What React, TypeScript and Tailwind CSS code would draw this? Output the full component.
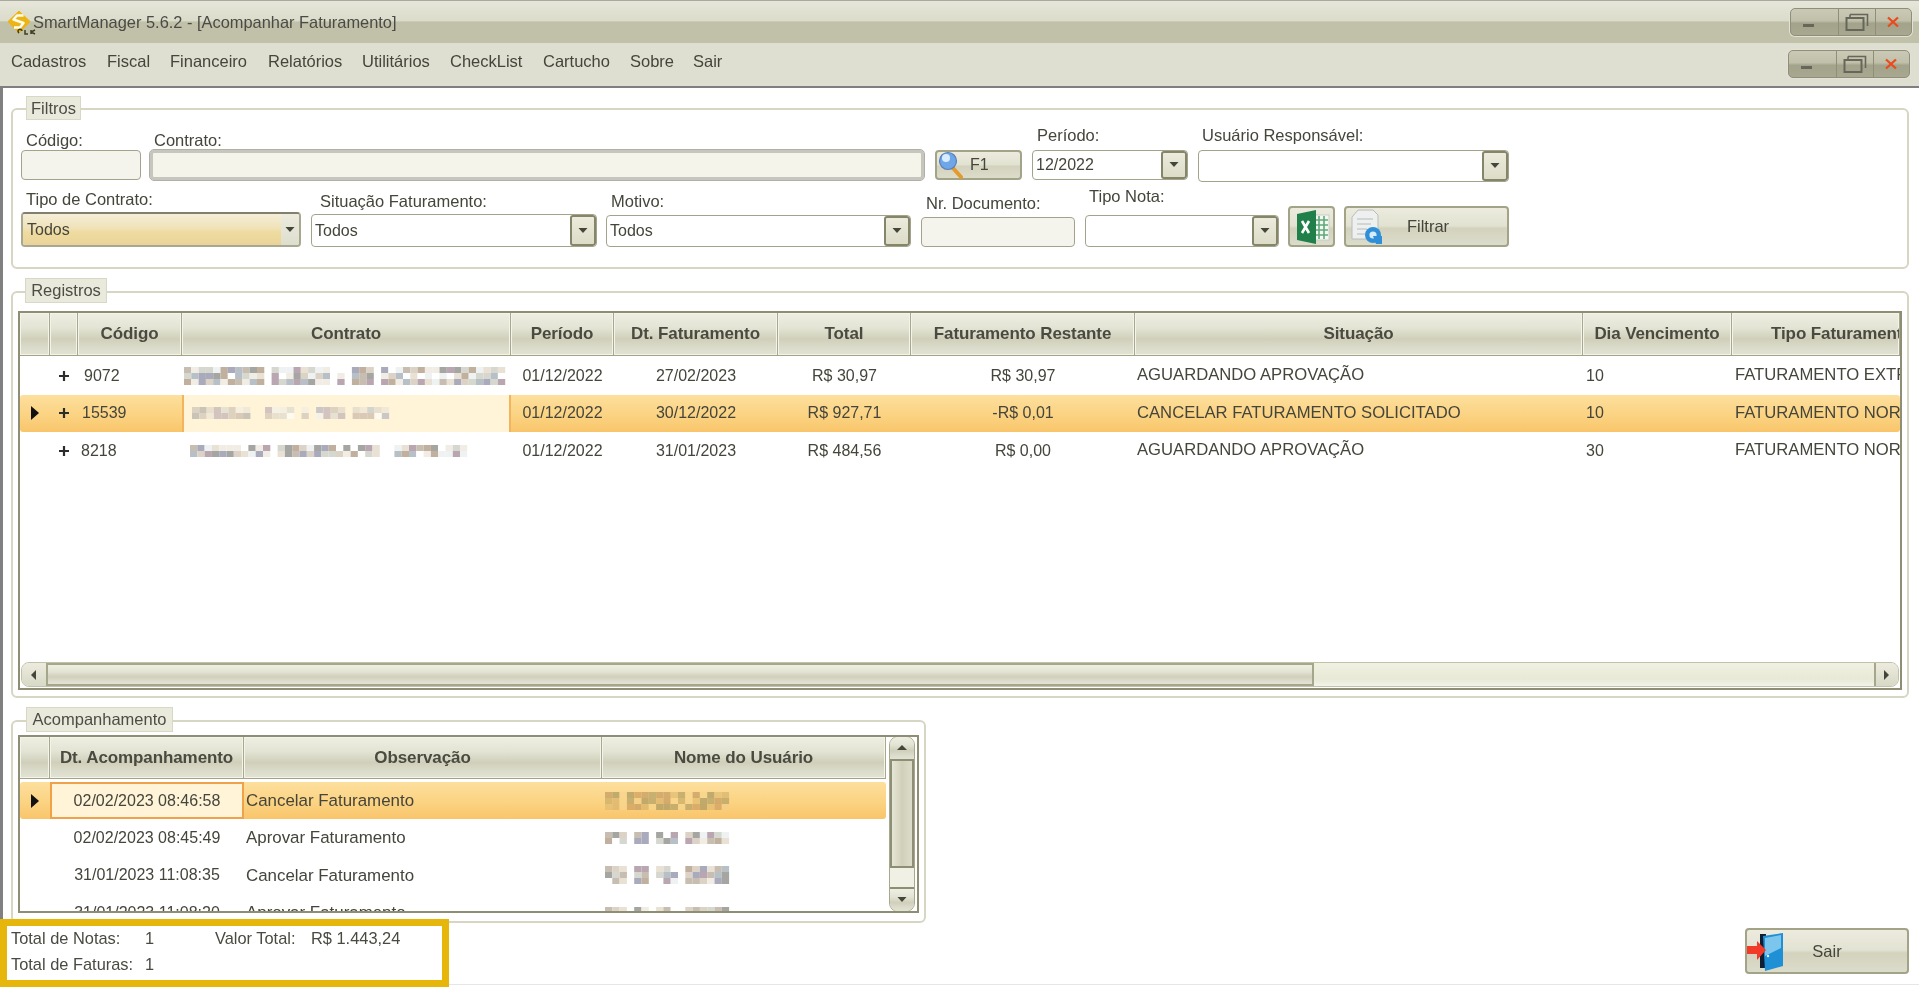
import React from "react";

const HDR = "bg-[linear-gradient(to_bottom,#eeeee2_0%,#e4e4d5_35%,#cfcfba_62%,#dadac9_80%,#e3e3d5_100%)]";
const BTN = "bg-[linear-gradient(to_bottom,#ecebde_0%,#e2e2d2_48%,#d2d2bd_55%,#dcdccb_100%)] border-2 border-[#a3a387] rounded-[4px]";
const SEL = "bg-[linear-gradient(to_bottom,#fddf9d_0%,#fbd382_55%,#f9c56b_100%)]";

function rnd(seed: number) {
  let s = seed;
  return () => {
    s = (s * 16807) % 2147483647;
    return s / 2147483647;
  };
}

const PAL_A = ["#c7bdb0", "#e9e1d4", "#a9abbd", "#b9a6b0", "#d6d7cf", "#a5a6a2", "#f1ede5", "#c2b09f", "#ffffff", "#b7c0c6", "#dcd3c6", "#eef2f2"];
const PAL_B = ["#c49a62", "#d9b36c", "#b3a066", "#e0bd72", "#c8ad66", "#f3cf85", "#a89862", "#cf9e60", "#f7d68e"];

function Mosaic({ w, h, seed, warm = false, gaps = [] as number[] }: { w: number; h: number; seed: number; warm?: boolean; gaps?: number[] }) {
  const r = rnd(seed);
  const cw = 7.3;
  const ch = 6;
  const pal = warm ? PAL_B : PAL_A;
  const cols = Math.floor(w / cw);
  const rows = Math.floor(h / ch);
  const rects: React.ReactNode[] = [];
  for (let x = 0; x < cols; x++) {
    if (gaps.includes(x)) continue;
    for (let y = 0; y < rows; y++) {
      const c = pal[Math.floor(r() * pal.length)];
      rects.push(<rect key={x + "-" + y} x={x * cw} y={y * ch} width={cw} height={ch} fill={c} />);
    }
  }
  return (
    <svg width={w} height={h} viewBox={`0 0 ${w} ${h}`} className="block shrink-0">
      {rects}
    </svg>
  );
}

function Caret({ dir = "down" }: { dir?: "down" | "up" | "left" | "right" }) {
  const pts = { down: "1.5,3 10.5,3 6,8", up: "1,8 11,8 6,3", left: "8,1 8,11 3,6", right: "3,1 3,11 8,6" }[dir];
  return (
    <svg width="12" height="12" viewBox="0 0 12 12" className="block shrink-0">
      <polygon points={pts} fill="#45453a" />
    </svg>
  );
}

function Logo() {
  return (
    <svg width="29" height="24" viewBox="0 0 29 24" className="block shrink-0">
      <polygon points="11,0 22,10.5 11,22 0,10.5" fill="#edb412" stroke="#edb412" strokeWidth="1" strokeLinejoin="round" />
      <path d="M15.5 4.5 L9 4.5 L5.5 8.5 L15.5 12 L12 16.5 L6 16.5" fill="none" stroke="#fffdf0" strokeWidth="2.4" strokeLinejoin="round" />
      <path d="M11 22 a2 2 0 1 1 3 -2 M17 19 V23 H20 M23 19 V23 M23 21 L27 19 M23 21 L27 23" fill="none" stroke="#3f3f24" strokeWidth="1.5" />
    </svg>
  );
}

function WinButtons() {
  return (
    <div className="flex h-[28px] w-[122px] rounded-[5px] border border-[#8f8f78] bg-[linear-gradient(to_bottom,#c9c9b6_0%,#c0c0aa_45%,#a3a38b_55%,#a8a892_100%)] shadow-[0_0_0_1px_#e2e2d6]">
      <div className="flex-1 flex items-end justify-center pb-[8px] pr-[12px] border-r border-[#8f8f78]">
        <div className="w-[11px] h-[3px] bg-[#66665c]" />
      </div>
      <div className="flex-1 flex items-center justify-center border-r border-[#8f8f78]">
        <svg width="24" height="20" viewBox="0 0 24 20">
          <path d="M5 2.5 H22.5 V14" fill="none" stroke="#66665a" strokeWidth="1.6" />
          <path d="M5 2.5 V5" fill="none" stroke="#66665a" strokeWidth="1.6" />
          <rect x="1.5" y="6" width="17" height="12" fill="none" stroke="#66665a" strokeWidth="2" />
        </svg>
      </div>
      <div className="flex-1 flex items-center justify-center">
        <svg width="12" height="12" viewBox="0 0 12 12">
          <path d="M1 1.5 L11 10.5 M11 1.5 L1 10.5" stroke="#ea4a1c" strokeWidth="2.3" />
        </svg>
      </div>
    </div>
  );
}

function Group({ title, legendClass, className, children }: { title: string; legendClass: string; className: string; children: React.ReactNode }) {
  return (
    <div className={`relative border-2 border-[#d6d6c2] rounded-[6px] ${className}`}>
      <div className={`absolute flex items-center justify-center bg-[#e9e9dc] border border-[#d8d8c6] text-[#4d4d46] text-[16.5px] ${legendClass}`}>{title}</div>
      {children}
    </div>
  );
}

function Field({ label, w, ml, pl, mb, children }: { label: string; w: string; ml: string; pl: string; mb: string; children: React.ReactNode }) {
  return (
    <div className={`flex flex-col justify-end shrink-0 ${w} ${ml}`}>
      <div className={`h-[20px] leading-[20px] text-[16.5px] whitespace-nowrap ${pl} ${mb}`}>{label}</div>
      {children}
    </div>
  );
}

function Select({ value, h }: { value?: string; h: string }) {
  return (
    <div className={`flex items-stretch bg-white border border-[#a3a38c] rounded-[4px] overflow-hidden ${h}`}>
      <div className="flex-1 flex items-center pl-[3px] text-[16px]">{value}</div>
      <div className="w-[26px] flex items-center justify-center border-2 border-[#85856a] rounded-[3px] bg-[linear-gradient(to_bottom,#ecebdc_0%,#dcdcc8_100%)]">
        <Caret />
      </div>
    </div>
  );
}

function TextBox({ h }: { h: string }) {
  return <div className={`bg-[#f4f4ec] border border-[#a3a38c] rounded-[4px] ${h}`} />;
}

function Magnifier() {
  return (
    <svg width="26" height="28" viewBox="0 0 26 28" className="block shrink-0">
      <path d="M14 16 L23 26" stroke="#e49a2c" strokeWidth="4" strokeLinecap="round" />
      <circle cx="10" cy="10" r="8.5" fill="#6ea6e8" stroke="#5a7fb8" strokeWidth="1.2" />
      <circle cx="8" cy="7" r="4" fill="#d8ecff" />
    </svg>
  );
}

function ExcelIcon() {
  return (
    <svg width="36" height="36" viewBox="0 0 36 36" className="block shrink-0">
      <rect x="18" y="6" width="17" height="25" fill="#f5f7f2" stroke="#c8cec4" />
      <path d="M20 11 H34 M20 16 H34 M20 21 H34 M20 26 H34 M25 7 V30 M30 7 V30" stroke="#5fa97a" strokeWidth="1.6" />
      <polygon points="3,5 22,1 22,35 3,31" fill="#21804a" />
      <path d="M8 12 L15 24 M15 12 L8 24" stroke="#fff" strokeWidth="2.6" />
    </svg>
  );
}

function FilterIcon() {
  return (
    <svg width="32" height="36" viewBox="0 0 32 36" className="block shrink-0">
      <path d="M7 1 H22 L27 6 V30 H1 V8 Z" fill="#eef0f0" stroke="#b9bcbc" />
      <path d="M6 10 H22 M6 15 H20 M6 20 H16 M6 25 H14" stroke="#c9cccc" strokeWidth="1.4" />
      <circle cx="22" cy="26" r="8" fill="#2f8fd8" />
      <circle cx="22" cy="26" r="3.6" fill="#d7ecfb" />
      <polygon points="22,27 31,27 31,35 25,35" fill="#2f8fd8" />
    </svg>
  );
}

function DoorIcon() {
  return (
    <svg width="38" height="40" viewBox="0 0 38 40" className="block shrink-0">
      <rect x="13" y="2" width="6" height="34" fill="#0e1e33" />
      <polygon points="16,4 36,1 36,34 18,39" fill="#1f8fd6" />
      <polygon points="18,6 34,3 34,16 18,24" fill="#7cc6ee" />
      <polygon points="0,14 10,14 10,9 19,18 10,28 10,22 0,22" fill="#f13a28" />
      <circle cx="21" cy="24" r="1.2" fill="#e8f4fb" />
    </svg>
  );
}

function Plus() {
  return (
    <svg width="12" height="12" viewBox="0 0 12 12" className="block shrink-0">
      <path d="M6 1 V11 M1 6 H11" stroke="#2c2c28" strokeWidth="2.2" />
    </svg>
  );
}

function Arrow() {
  return (
    <svg width="8" height="14" viewBox="0 0 8 14" className="block shrink-0">
      <polygon points="0,0 8,7 0,14" fill="#111" />
    </svg>
  );
}

function H({ w, children }: { w: string; children?: React.ReactNode }) {
  return (
    <div className={`${w} h-full shrink-0 flex items-center justify-center overflow-hidden whitespace-nowrap font-bold text-[17px] tracking-[-0.1px] text-[#4a4a40] border-r border-[#a8a88e] shadow-[inset_1px_1px_0_#f4f4ea,inset_-1px_-1px_0_#f4f4ea]`}>
      {children}
    </div>
  );
}

const regs = [
  { code: "9072", pl: "pl-[6px]", mos: { w: 324, h: 18, seed: 71, gaps: [11, 20, 22, 26] }, mosPl: "pl-[2px]", p: "01/12/2022", d: "27/02/2023", t: "R$ 30,97", r: "R$ 30,97", s: "AGUARDANDO APROVAÇÃO", dia: "10", tipo: "FATURAMENTO EXTRA" },
  { code: "15539", pl: "pl-[4px]", mos: { w: 198, h: 12, seed: 133, gaps: [8, 9, 14, 16, 21] }, mosPl: "pl-[8px]", p: "01/12/2022", d: "30/12/2022", t: "R$ 927,71", r: "-R$ 0,01", s: "CANCELAR FATURAMENTO SOLICITADO", dia: "10", tipo: "FATURAMENTO NORMAL", sel: true },
  { code: "8218", pl: "pl-[3px]", mos: { w: 290, h: 12, seed: 257, gaps: [11, 26, 27] }, mosPl: "pl-[8px]", p: "01/12/2022", d: "31/01/2023", t: "R$ 484,56", r: "R$ 0,00", s: "AGUARDANDO APROVAÇÃO", dia: "30", tipo: "FATURAMENTO NORMAL" },
];

const acomp = [
  { d: "02/02/2023 08:46:58", o: "Cancelar Faturamento", sel: true, seed: 19, mh: 18 },
  { d: "02/02/2023 08:45:49", o: "Aprovar Faturamento", seed: 43, mh: 12 },
  { d: "31/01/2023 11:08:35", o: "Cancelar Faturamento", seed: 87, mh: 18 },
  { d: "31/01/2023 11:08:20", o: "Aprovar Faturamento", seed: 201, mh: 12 },
];

export default function App() {
  return (
    <div className="relative w-[1919px] h-[987px] overflow-hidden flex flex-col bg-white text-[#45453c] font-['Liberation_Sans',sans-serif] blur-[0.4px]">
      {/* Title bar */}
      <div className="h-[43px] shrink-0 flex items-center border-t border-[#a9a99d] bg-[linear-gradient(to_bottom,#e6e6da_0%,#dcdccb_47%,#c1c0a9_50%,#c1c0a9_100%)]">
        <div className="ml-[8px] mt-[2px] w-[25px]"><Logo /></div>
        <div className="text-[16.4px] text-[#4b4b46] whitespace-nowrap">SmartManager 5.6.2 - [Acompanhar Faturamento]</div>
        <div className="ml-auto mr-[7px]"><WinButtons /></div>
      </div>
      {/* Menu */}
      <div className="h-[45px] shrink-0 flex items-center bg-[#dedfd0] border-b-2 border-[#7f7f7f] pl-[11px] text-[16.5px] text-[#45453c]">
        <span className="w-[96px] mb-[7px]">Cadastros</span>
        <span className="w-[63px] mb-[7px]">Fiscal</span>
        <span className="w-[98px] mb-[7px]">Financeiro</span>
        <span className="w-[94px] mb-[7px]">Relatórios</span>
        <span className="w-[88px] mb-[7px]">Utilitários</span>
        <span className="w-[93px] mb-[7px]">CheckList</span>
        <span className="w-[87px] mb-[7px]">Cartucho</span>
        <span className="w-[63px] mb-[7px]">Sobre</span>
        <span className="mb-[7px]">Sair</span>
        <div className="ml-auto mr-[9px] mb-[2px]"><WinButtons /></div>
      </div>
      {/* Body */}
      <div className="flex-1 flex flex-col border-l-[3px] border-[#808080] border-b border-b-[#e6e6e6] mb-[2px] pl-[8px] pr-[10px] pt-[20px] min-h-0">
        {/* Filtros */}
        <Group title="Filtros" legendClass="left-[13px] top-[-14px] w-[55px] h-[24px]" className="h-[161px] shrink-0 pl-[8px] pt-[15px]">
          <div className="flex h-[57px]">
            <Field label="Código:" w="w-[120px]" ml="ml-0" pl="pl-[5px]" mb="mb-0"><div className="mb-[2px]"><TextBox h="h-[30px]" /></div></Field>
            <Field label="Contrato:" w="w-[774px]" ml="ml-[9px]" pl="pl-[4px]" mb="mb-0">
              <div className="mb-[2px] h-[30px] bg-[#f4f4ea] border-[3px] border-[#c6c6be] rounded-[4px] outline-1 outline-[#b0b0a8]" />
            </Field>
            <div className="flex flex-col justify-start pt-[25px] ml-[11px] mb-[2px]">
              <div className={`w-[87px] h-[30px] flex items-center ${BTN}`}>
                <div className="ml-[1px]"><Magnifier /></div>
                <span className="ml-[6px] text-[16px]">F1</span>
              </div>
            </div>
            <Field label="Período:" w="w-[156px]" ml="ml-[10px]" pl="pl-[5px]" mb="mb-[5px]"><div className="mb-[2px]"><Select value="12/2022" h="h-[30px]" /></div></Field>
            <Field label="Usuário Responsável:" w="w-[311px]" ml="ml-[10px]" pl="pl-[4px]" mb="mb-[5px]"><Select h="h-[32px]" /></Field>
          </div>
          <div className="flex h-[60px] mt-[5px] items-end">
            <Field label="Tipo de Contrato:" w="w-[280px]" ml="ml-0" pl="pl-[5px]" mb="mb-[3px]">
              <div className="h-[35px] flex rounded-[4px] border-2 border-[#a8a890] border-t-[#80806c] overflow-hidden">
                <div className="flex-1 flex items-center pl-[4px] text-[16px] bg-[linear-gradient(to_bottom,#f5eed8_0%,#f0e2b8_45%,#eedb9f_60%,#ead39a_100%)]">Todos</div>
                <div className="w-[18px] flex items-center justify-center bg-[linear-gradient(to_bottom,#ecebdd_0%,#dedecf_100%)]"><Caret /></div>
              </div>
            </Field>
            <Field label="Situação Faturamento:" w="w-[286px]" ml="ml-[10px]" pl="pl-[9px]" mb="mb-[3px]"><Select value="Todos" h="h-[33px]" /></Field>
            <Field label="Motivo:" w="w-[305px]" ml="ml-[9px]" pl="pl-[5px]" mb="mb-[4px]"><Select value="Todos" h="h-[32px]" /></Field>
            <Field label="Nr. Documento:" w="w-[154px]" ml="ml-[10px]" pl="pl-[5px]" mb="mb-[4px]"><TextBox h="h-[30px]" /></Field>
            <Field label="Tipo Nota:" w="w-[194px]" ml="ml-[10px]" pl="pl-[4px]" mb="mb-[9px]"><Select h="h-[32px]" /></Field>
            <div className={`w-[47px] h-[41px] ml-[9px] shrink-0 flex items-center justify-center ${BTN}`}><ExcelIcon /></div>
            <div className={`relative w-[165px] h-[41px] ml-[9px] shrink-0 flex items-center justify-center ${BTN}`}>
              <div className="absolute left-[5px] top-[1px]"><FilterIcon /></div>
              <span className="text-[16.5px] ml-[3px]">Filtrar</span>
            </div>
          </div>
        </Group>

        {/* Registros */}
        <Group title="Registros" legendClass="left-[12px] top-[-15px] w-[82px] h-[25px]" className="h-[407px] mt-[22px] shrink-0 pt-[18px] px-[5px]">
          <div className="h-[379px] border-2 border-[#8e8e74] flex flex-col overflow-hidden">
            <div className={`h-[43px] shrink-0 flex border-b border-[#a3a388] ${HDR}`}>
              <H w="w-[30px]" />
              <H w="w-[28px]" />
              <H w="w-[104px]">Código</H>
              <H w="w-[329px]">Contrato</H>
              <H w="w-[103px]">Período</H>
              <H w="w-[164px]">Dt. Faturamento</H>
              <H w="w-[133px]">Total</H>
              <H w="w-[224px]">Faturamento Restante</H>
              <H w="w-[448px]">Situação</H>
              <H w="w-[149px]">Dia Vencimento</H>
              <H w="w-[168px]"><span className="block w-full pl-[39px] overflow-hidden">Tipo Faturamento</span></H>
            </div>
            <div className="flex-1 min-h-0 pt-[1px] bg-white text-[16px]">
              {regs.map((row) => (
                <div key={row.code} className={`h-[37.5px] flex items-center whitespace-nowrap ${row.sel ? SEL + " rounded-[3px]" : ""}`}>
                  <div className="w-[30px] shrink-0 flex justify-center">{row.sel ? <Arrow /> : null}</div>
                  <div className="w-[28px] shrink-0 flex justify-center"><Plus /></div>
                  <div className={`w-[104px] shrink-0 ${row.pl}`}>{row.code}</div>
                  <div className={`w-[329px] h-full shrink-0 flex items-center ${row.mosPl} ${row.sel ? "bg-[#fff3d8] border-x-2 border-[#f2b45c]" : ""}`}>
                    <div className={row.sel ? "opacity-60" : ""}><Mosaic {...row.mos} /></div>
                  </div>
                  <div className="w-[103px] shrink-0 text-center">{row.p}</div>
                  <div className="w-[164px] shrink-0 text-center">{row.d}</div>
                  <div className="w-[133px] shrink-0 text-center">{row.t}</div>
                  <div className="w-[224px] shrink-0 text-center">{row.r}</div>
                  <div className="w-[448px] shrink-0 pl-[2px] text-[16.65px]">{row.s}</div>
                  <div className="w-[149px] shrink-0 pl-[3px]">{row.dia}</div>
                  <div className="w-[168px] shrink-0 pl-[3px] overflow-hidden text-[16.65px]">{row.tipo}</div>
                </div>
              ))}
            </div>
            <div className="h-[25px] mb-[1px] mx-[1px] shrink-0 flex border border-[#c2c2aa] rounded-[8px] overflow-hidden bg-[linear-gradient(to_bottom,#f1f1e2_0%,#e9e9d7_70%,#f3f3e8_100%)]">
              <div className="w-[26px] shrink-0 flex items-center justify-center border-r-2 border-[#a6a68a] bg-[linear-gradient(to_bottom,#ecebdf_0%,#d9d9c6_100%)]"><Caret dir="left" /></div>
              <div className={`w-[1266px] shrink-0 border-2 border-[#a6a68a] border-l-0 ${HDR}`} />
              <div className="flex-1" />
              <div className="w-[24px] shrink-0 flex items-center justify-center border-l-2 border-[#a6a68a] bg-[linear-gradient(to_bottom,#ecebdf_0%,#d9d9c6_100%)]"><Caret dir="right" /></div>
            </div>
          </div>
        </Group>

        {/* Acompanhamento */}
        <Group title="Acompanhamento" legendClass="left-[13px] top-[-15px] w-[147px] h-[25px]" className="w-[915px] h-[203px] mt-[22px] shrink-0 pt-[13px] px-[5px]">
          <div className="h-[178px] border-2 border-[#8e8e74] flex overflow-hidden">
            <div className="w-[866px] shrink-0 flex flex-col overflow-hidden">
              <div className={`h-[42px] shrink-0 flex border-b border-[#a3a388] ${HDR}`}>
                <H w="w-[30px]" />
                <H w="w-[194px]">Dt. Acompanhamento</H>
                <H w="w-[358px]">Observação</H>
                <H w="w-[284px]">Nome do Usuário</H>
              </div>
              <div className="pt-[3px] text-[16px]">
                {acomp.map((a) => (
                  <div key={a.d} className={`h-[37.3px] flex items-center whitespace-nowrap ${a.sel ? SEL + " rounded-[3px]" : ""}`}>
                    <div className="w-[30px] shrink-0 flex justify-center">{a.sel ? <Arrow /> : null}</div>
                    <div className={`w-[194px] h-full shrink-0 flex items-center justify-center ${a.sel ? "bg-[#fff3d8] border-2 border-[#f0a24a]" : ""}`}>{a.d}</div>
                    <div className="w-[358px] shrink-0 pl-[2px] text-[16.9px]">{a.o}</div>
                    <div className="w-[284px] shrink-0 pl-[3px]">
                      <div className={a.sel ? "opacity-70" : ""}>
                        <Mosaic w={126} h={a.mh} seed={a.seed} warm={a.sel} gaps={a.sel ? [] : [3, 6, 10]} />
                      </div>
                    </div>
                  </div>
                ))}
              </div>
            </div>
            <div className="w-[26px] ml-[3px] my-[-1px] flex flex-col border border-[#a8a88c] rounded-[9px] overflow-hidden bg-[#f0f0e4]">
              <div className={`h-[24px] shrink-0 flex items-center justify-center border-b-2 border-[#8e8e74] ${HDR}`}><Caret dir="up" /></div>
              <div className="h-[107px] shrink-0 border-2 border-t-0 border-[#8e8e74] bg-[linear-gradient(to_right,#e6e6d6_0%,#d0d0ba_50%,#dcdccb_100%)]" />
              <div className="flex-1" />
              <div className={`h-[24px] shrink-0 flex items-center justify-center border-t-2 border-[#8e8e74] ${HDR}`}><Caret /></div>
            </div>
          </div>
        </Group>

        {/* Sair */}
        <div className="flex justify-end mt-[5px]">
          <div className={`relative w-[164px] h-[46px] flex items-center justify-center ${BTN}`}>
            <div className="absolute left-0 top-[2px]"><DoorIcon /></div>
            <span className="text-[16.5px]">Sair</span>
          </div>
        </div>
      </div>

      {/* Highlight overlay */}
      <div className="absolute left-0 bottom-0 w-[449px] h-[68px] bg-white border-[7px] border-[#e6b70a] pl-[4px] text-[16.4px] text-[#4a4a42] whitespace-nowrap">
        <div className="h-[26px] flex items-center mt-[-1px]">
          <span className="w-[134px]">Total de Notas:</span>
          <span className="w-[70px]">1</span>
          <span className="w-[96px]">Valor Total:</span>
          <span>R$ 1.443,24</span>
        </div>
        <div className="h-[27px] flex items-center">
          <span className="w-[134px]">Total de Faturas:</span>
          <span>1</span>
        </div>
      </div>
    </div>
  );
}
